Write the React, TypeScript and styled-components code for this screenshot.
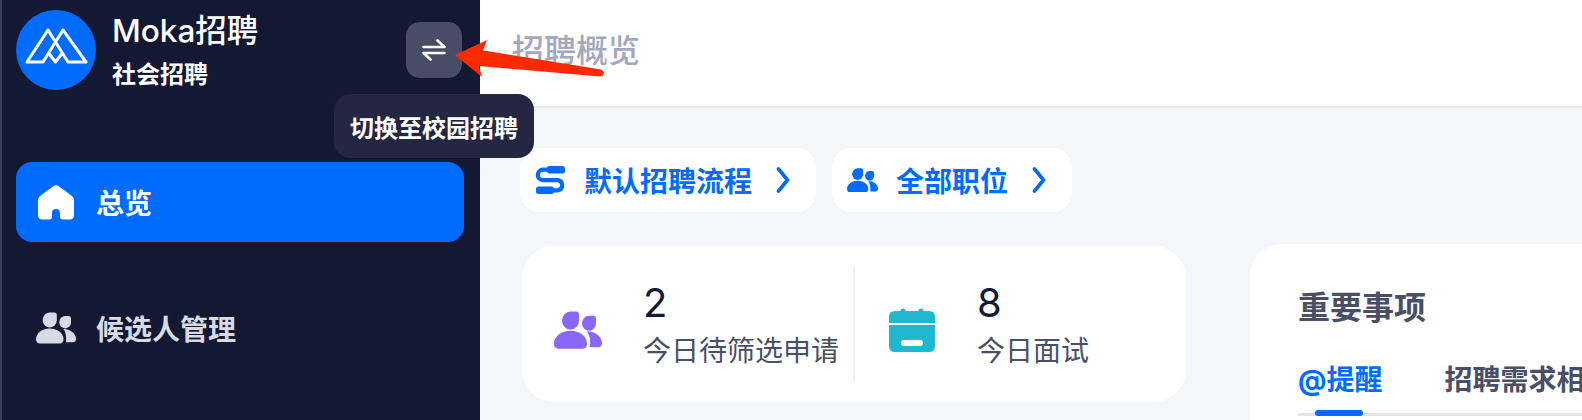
import React from "react";
import styled, { createGlobalStyle } from "styled-components";

const FONT = `Inter, "Noto Sans CJK SC", sans-serif`;

const Global = createGlobalStyle`
  html, body { margin: 0; padding: 0; overflow: hidden; background: #f4f6fa; }
  * { box-sizing: border-box; }
  body { font-family: ${FONT}; }
`;

const Page = styled.div`
  position: relative;
  display: flex;
  width: 1582px;
  height: 420px;
  overflow: hidden;
`;

const Sidebar = styled.aside`
  position: relative;
  z-index: 2;
  flex: 0 0 480px;
  background: #141933;
  border-left: 2px solid #3d4257;
  padding: 10px 16px 0 14px;
`;

const Brand = styled.div`
  display: flex;
  align-items: center;
  height: 80px;
`;

const BrandText = styled.div`
  display: flex;
  flex-direction: column;
  margin-left: 16px;
  margin-top: 3px;
  color: #fff;
`;

const BrandName = styled.div`
  font-size: 31.5px;
  line-height: 40px;
  font-weight: 500;
`;

const BrandSub = styled.div`
  font-size: 24px;
  line-height: 36px;
  font-weight: 700;
  margin-top: 6px;
`;

const SwitchWrap = styled.div`
  position: relative;
  margin-left: auto;
  margin-right: 2px;
`;

const SwitchButton = styled.div`
  width: 56px;
  height: 56px;
  border-radius: 14px;
  background: #484c66;
  display: flex;
  align-items: center;
  justify-content: center;
`;

const Tooltip = styled.div`
  position: absolute;
  top: calc(100% + 16px);
  left: 50%;
  transform: translateX(-50%);
  width: 200px;
  height: 64px;
  border-radius: 16px;
  background: #232742;
  color: #fff;
  font-size: 24px;
  font-weight: 700;
  display: flex;
  align-items: center;
  justify-content: center;
  white-space: nowrap;
`;

const Nav = styled.nav`
  display: flex;
  flex-direction: column;
  gap: 46px;
  margin-top: 72px;
`;

const NavItem = styled.div<{ $active?: boolean }>`
  display: flex;
  align-items: center;
  gap: 20px;
  height: 80px;
  padding-left: 20px;
  border-radius: 16px;
  font-size: 28px;
  font-weight: 700;
  background: ${(p) => (p.$active ? "#006bff" : "transparent")};
  color: ${(p) => (p.$active ? "#ffffff" : "#d8dbe5")};
`;

const NavIcon = styled.span`
  width: 40px;
  display: flex;
  justify-content: center;
`;

const Main = styled.main`
  flex: 1;
  min-width: 0;
  display: flex;
  flex-direction: column;
`;

const Header = styled.header`
  flex: 0 0 108px;
  background: #fff;
  border-bottom: 2px solid #e6e7f0;
  display: flex;
  align-items: center;
  padding: 0 0 10px 32px;
  font-size: 32px;
  font-weight: 500;
  color: #a3a8bd;
`;

const Content = styled.div`
  position: relative;
  flex: 1;
  min-height: 0;
  overflow: hidden;
  padding: 40px 0 0 40px;
`;

const Shortcuts = styled.div`
  display: flex;
  gap: 16px;
`;

const Shortcut = styled.div`
  display: flex;
  align-items: center;
  gap: 18px;
  height: 64px;
  padding: 0 26px 0 15px;
  border-radius: 20px;
  background: #fff;
  color: #006bff;
  font-size: 28px;
  font-weight: 700;
`;

const Chevron = styled.svg`
  margin-left: 6px;
`;

const Cards = styled.div`
  display: flex;
  align-items: flex-start;
  margin-top: 32px;
  gap: 64px;
`;

const StatsCard = styled.section`
  display: flex;
  flex: 0 0 664px;
  height: 156px;
  margin: 2px 0 0 2px;
  padding-left: 32px;
  border-radius: 32px;
  background: #fff;
`;

const Stat = styled.div`
  display: flex;
  align-items: center;
`;

const StatIcon = styled.div`
  flex: 0 0 48px;
  display: flex;
  justify-content: center;
  margin-top: 12px;
`;

const StatText = styled.div`
  margin-left: 41px;
  margin-top: 1px;
`;

const StatValue = styled.div`
  font-size: 40px;
  line-height: 48px;
  color: #141a33;
`;

const StatLabel = styled.div`
  font-size: 28px;
  line-height: 40px;
  margin-top: 4px;
  color: #4a4f68;
  white-space: nowrap;
`;

const StatDivider = styled.div`
  width: 2px;
  margin: 20px 33px 20px 14px;
  background: #f1f2f6;
`;

const ImportantCard = styled.section`
  flex: 1;
  min-width: 0;
  height: 300px;
  padding: 40px 0 0 48px;
  border-radius: 32px 0 0 32px;
  background: #fff;
`;

const CardTitle = styled.h2`
  margin: 0;
  font-size: 32px;
  line-height: 48px;
  font-weight: 700;
  color: #4a4f68;
`;

const Tabs = styled.div`
  display: flex;
  gap: 62px;
  margin-top: 28px;
  height: 56px;
  border-bottom: 3px solid #e3e4ea;
  white-space: nowrap;
`;

const Tab = styled.div<{ $active?: boolean }>`
  position: relative;
  height: 53px;
  line-height: 40px;
  font-size: 28px;
  font-weight: 700;
  color: ${(p) => (p.$active ? "#006bff" : "#4a4f68")};
  ${(p) =>
    p.$active &&
    `&::after {
      content: "";
      position: absolute;
      left: 17px;
      bottom: -3px;
      width: 48px;
      height: 6px;
      border-radius: 3px;
      background: #006bff;
    }`}
`;

const WatermarkLayer = styled.div`
  position: absolute;
  left: -155px;
  top: 217px;
  display: grid;
  grid-template-columns: repeat(5, 410px);
  grid-auto-rows: 200px;
  pointer-events: none;
`;

const Watermark = styled.div`
  width: max-content;
  height: 0;
  transform: rotate(-30deg);
  transform-origin: 0 0;
  text-align: center;
  font-size: 26px;
  line-height: 32px;
  color: rgba(30, 40, 80, 0.025);
  white-space: nowrap;
`;

const ArrowOverlay = styled.svg`
  position: absolute;
  left: 0;
  top: 0;
  z-index: 3;
  pointer-events: none;
`;

const Users = ({ width, color }: { width: number; color: string }) => (
  <svg width={width} height={width * 0.8} viewBox="0 0 48 36" preserveAspectRatio="none" fill={color}>
    <path d="M16.5.5H22q3 0 3 3V9a8.5 8.5 0 1 1-8.5-8.5Z" />
    <path d="M5 35.5q-5 0-5-5c0-7 8-12 16.5-12S33 23.500 33 30.500q0 5-5 5Z" />
    <path d="M35 4.500h4q3 0 3 3v4a7 7 0 1 1-7-7Z" />
    <path d="M33 19c8 0 15 5 15 11q0 4-4 4h-8c.5-6 0-11-3-15Z" />
  </svg>
);

const Arrowhead = () => (
  <Chevron width="14" height="26" viewBox="0 0 14 26" fill="none" stroke="#006bff" strokeWidth="3.600" strokeLinecap="round" strokeLinejoin="round">
    <path d="M2.500 2 11.500 13 2.500 24" />
  </Chevron>
);

const marks = Array.from({ length: 10 }, (_, i) => i);

export default function App() {
  return (
    <Page>
      <Global />
      <Sidebar>
        <Brand>
          <svg width="80" height="80" viewBox="0 0 80 80">
            <circle cx="40" cy="40" r="40" fill="#006bff" />
            <path
              d="M27 52 47 20 70 52H52L32 20 11 52ZM32.600 43 39.500 52 46.400 43"
              fill="none"
              stroke="#fff"
              strokeWidth="3"
              strokeLinejoin="round"
              strokeLinecap="round"
            />
          </svg>
          <BrandText>
            <BrandName>Moka招聘</BrandName>
            <BrandSub>社会招聘</BrandSub>
          </BrandText>
          <SwitchWrap>
            <SwitchButton>
              <svg width="24" height="22" viewBox="0 0 24 22" fill="none" stroke="#fff" strokeWidth="2.600" strokeLinecap="round" strokeLinejoin="round">
                <path d="M1.500 8H22.500L15.500 1.500" />
                <path d="M22.500 14H1.500L8.500 20.500" />
              </svg>
            </SwitchButton>
            <Tooltip>切换至校园招聘</Tooltip>
          </SwitchWrap>
        </Brand>
        <Nav>
          <NavItem $active>
            <NavIcon>
              <svg width="36" height="35" viewBox="0 0 36 35" fill="#fff">
                <path d="M15.500 1q2.500-1.500 5 0L34 11q2 1.500 2 4v15q0 4.500-4.500 4.500H25q-3 0-3-3V28a4 4 0 0 0-8 0v3.500q0 3-3 3H4.500Q0 34.500 0 30V15q0-2.500 2-4Z" />
              </svg>
            </NavIcon>
            总览
          </NavItem>
          <NavItem>
            <NavIcon>
              <Users width={40} color="#d8dbe5" />
            </NavIcon>
            候选人管理
          </NavItem>
        </Nav>
      </Sidebar>
      <Main>
        <Header>招聘概览</Header>
        <Content>
          <Shortcuts>
            <Shortcut>
              <svg width="31" height="28" viewBox="-1 0 31 28" fill="#006bff">
                <rect x="11" y="0" width="18" height="7.500" rx="2.500" />
                <rect x="0" y="20.500" width="18" height="7.500" rx="2.500" />
                <path d="M14 3.700H7a5.200 5.200 0 0 0 0 10.400h15a5.200 5.200 0 0 1 0 10.200h-8" fill="none" stroke="#006bff" strokeWidth="4.200" />
              </svg>
              默认招聘流程
              <Arrowhead />
            </Shortcut>
            <Shortcut>
              <Users width={31} color="#006bff" />
              全部职位
              <Arrowhead />
            </Shortcut>
          </Shortcuts>
          <Cards>
            <StatsCard>
              <Stat>
                <StatIcon>
                  <Users width={48} color="#8b66f8" />
                </StatIcon>
                <StatText>
                  <StatValue>2</StatValue>
                  <StatLabel>今日待筛选申请</StatLabel>
                </StatText>
              </Stat>
              <StatDivider />
              <Stat>
                <StatIcon>
                  <svg width="46" height="44" viewBox="0 0 46 44" fill="#20b8d0">
                    <path d="M6 3h5.500a2.500 2.500 0 0 1 5 0h13a2.500 2.500 0 0 1 5 0H40q6 0 6 6v6H0V9q0-6 6-6Z" />
                    <path fillRule="evenodd" d="M0 17h46v21q0 6-6 6H6q-6 0-6-6Zm15 15a3 3 0 0 0 0 6h16a3 3 0 0 0 0-6Z" />
                  </svg>
                </StatIcon>
                <StatText>
                  <StatValue>8</StatValue>
                  <StatLabel>今日面试</StatLabel>
                </StatText>
              </Stat>
            </StatsCard>
            <ImportantCard>
              <CardTitle>重要事项</CardTitle>
              <Tabs>
                <Tab $active>@提醒</Tab>
                <Tab>招聘需求相关</Tab>
              </Tabs>
            </ImportantCard>
          </Cards>
          <WatermarkLayer>
            {marks.map((i) => (
              <Watermark key={i}>
                莱某 2023-03-15 21:37
                <br />
                huxiaoqing
              </Watermark>
            ))}
          </WatermarkLayer>
        </Content>
      </Main>
      <ArrowOverlay width="1582" height="420" viewBox="0 0 1582 420">
        <path
          d="M455 55 487 40 483 50.500 601 69.500Q604 71 604 73 603 76.500 600 76.500L479 66 482 77Z"
          fill="#ff2a00"
        />
      </ArrowOverlay>
    </Page>
  );
}
